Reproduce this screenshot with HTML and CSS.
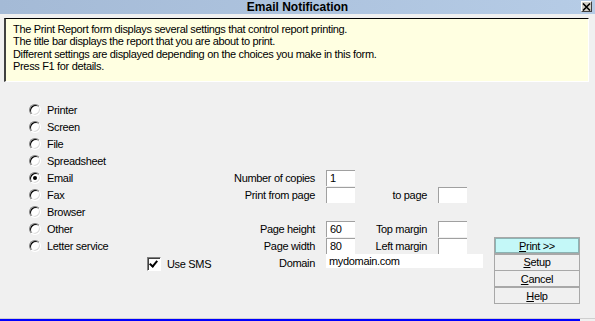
FILE: index.html
```html
<!DOCTYPE html>
<html lang="en">
<head>
    <meta charset="UTF-8">
    <title>Email Notification</title>
    <link rel="stylesheet" href="styles.css">
</head>
<body>
    <div class="titlebar">
        <span class="title">Email Notification</span>
        <span class="close">
            <svg width="9" height="8" viewBox="0 0 9 8"><path d="M1 0.5 L8 7.5 M8 0.5 L1 7.5" stroke="#000" stroke-width="1.6"/></svg>
        </span>
    </div>

    <div class="info">
        <p>The Print Report form displays several settings that control report printing.</p>
        <p>The title bar displays the report that you are about to print.</p>
        <p>Different settings are displayed depending on the choices you make in this form.</p>
        <p>Press F1 for details.</p>
    </div>

    <form class="form">
        <div class="options">
            <label class="radio"><span class="dot"></span>Printer</label>
            <label class="radio"><span class="dot"></span>Screen</label>
            <label class="radio"><span class="dot"></span>File</label>
            <label class="radio"><span class="dot"></span>Spreadsheet</label>
            <label class="radio checked"><span class="dot"></span>Email</label>
            <label class="radio"><span class="dot"></span>Fax</label>
            <label class="radio"><span class="dot"></span>Browser</label>
            <label class="radio"><span class="dot"></span>Other</label>
            <label class="radio"><span class="dot"></span>Letter service</label>
        </div>

        <span class="lbl left r5">Number of copies</span>
        <span class="field c3 r5">1</span>

        <span class="lbl left r6">Print from page</span>
        <span class="field c3 r6"></span>
        <span class="lbl right r6">to page</span>
        <span class="field c5 r6"></span>

        <span class="lbl left r8">Page height</span>
        <span class="field c3 r8">60</span>
        <span class="lbl right r8">Top margin</span>
        <span class="field c5 r8"></span>

        <span class="lbl left r9">Page width</span>
        <span class="field c3 r9">80</span>
        <span class="lbl right r9">Left margin</span>
        <span class="field c5 r9"></span>

        <label class="sms r10"><span class="box"></span>Use SMS</label>
        <span class="lbl left r10">Domain</span>
        <span class="field domain r10">mydomain.com</span>

        <div class="buttons">
            <button type="button" class="btn default"><u>P</u>rint &gt;&gt;</button>
            <button type="button" class="btn"><u>S</u>etup</button>
            <button type="button" class="btn"><u>C</u>ancel</button>
            <button type="button" class="btn"><u>H</u>elp</button>
        </div>
    </form>

    <div class="footer"><div class="bar"></div></div>
</body>
</html>
```

FILE: styles.css
```css
html, body {
    margin: 0;
    padding: 0;
}
body {
    font-family: 'Liberation Sans', Arial, sans-serif;
    font-size: 11px;
    letter-spacing: -0.33px;
    color: #000;
    background-color: #f0f0f0;
    height: 321px;
    overflow: hidden;
    display: flex;
    flex-direction: column;
}
.titlebar {
    height: 14px;
    background: linear-gradient(to right, #a4bad6, #b6cce6);
    display: flex;
    justify-content: center;
    align-items: center;
    position: relative;
}
.title {
    font-size: 12px;
    font-weight: bold;
    letter-spacing: 0;
}
.close {
    position: absolute;
    left: 581px;
    top: 1px;
    width: 9px;
    height: 9px;
    background-color: #d4d0c8;
    border: 1px solid;
    border-color: #fff #404040 #404040 #fff;
    display: flex;
    align-items: center;
    justify-content: center;
}
.info {
    margin: 4px 6px 0 4px;
    height: 54px;
    padding: 4px 8px 4px 7px;
    background-color: #ffffe1;
    border-style: solid;
    border-width: 1px 1px 1px 2px;
    border-color: #000 #fff #fff #404040;
}
.info p {
    margin: 0;
    line-height: 12.4px;
}
.form {
    display: grid;
    grid-template-columns: 118px 179px 29px 83px 29px 27px 86px;
    grid-template-rows: repeat(12, 17px);
    padding-left: 29px;
    margin-top: 19px;
}
.options {
    grid-column: 1;
    grid-row: 1 / span 9;
    display: flex;
    flex-direction: column;
}
.radio {
    height: 17px;
    display: flex;
    align-items: center;
    white-space: nowrap;
}
.dot {
    width: 12px;
    height: 12px;
    border-radius: 50%;
    box-sizing: border-box;
    background-color: #fff;
    border: 1px solid;
    border-color: #808080 #fff #fff #808080;
    box-shadow: inset 1px 1px 0 #000, inset -1px -1px 0 #dcdcdc;
    margin-right: 6px;
    position: relative;
}
.radio.checked .dot::after {
    content: '';
    position: absolute;
    left: 3px;
    top: 3px;
    width: 4px;
    height: 4px;
    border-radius: 50%;
    background-color: #000;
}
.lbl {
    align-self: center;
    text-align: right;
    padding-right: 11px;
    white-space: nowrap;
}
.lbl.left { grid-column: 2; }
.lbl.right { grid-column: 4; }
.r5 { grid-row: 5; }
.r6 { grid-row: 6; }
.r8 { grid-row: 8; }
.r9 { grid-row: 9; }
.r10 { grid-row: 10; }
.c3 { grid-column: 3; }
.c5 { grid-column: 5; }
.field {
    align-self: center;
    height: 16px;
    box-sizing: border-box;
    padding: 1px 0 0 3px;
    line-height: 13px;
    background-color: #fff;
    border-style: solid;
    border-width: 1px 0 0 1px;
    border-color: #a0a0a0;
}
.field.domain {
    grid-column: 3 / span 4;
    width: 157px;
    height: 14px;
    border: none;
    padding-top: 1px;
    align-self: start;
}
.sms {
    grid-column: 2;
    justify-self: start;
    align-self: center;
    display: flex;
    align-items: center;
    margin-top: 2px;
}
.box {
    width: 14px;
    height: 14px;
    box-sizing: border-box;
    border: 1px solid;
    border-color: #808080 #fff #fff #808080;
    box-shadow: inset 1px 1px 0 #404040;
    background-color: #fff;
    margin-right: 6px;
    position: relative;
}
.box::after {
    content: '';
    position: absolute;
    left: 3px;
    top: 1px;
    width: 3px;
    height: 6px;
    border: solid #000;
    border-width: 0 2px 2px 0;
    transform: rotate(40deg);
}
.buttons {
    grid-column: 7;
    grid-row: 9 / span 4;
    display: flex;
    flex-direction: column;
}
.btn {
    font-family: inherit;
    font-size: 11px;
    letter-spacing: inherit;
    height: 17px;
    padding: 0;
    margin: 0 0 -0.3px 0;
    background-color: #f0f0f0;
    border: 1px solid #a8a8a8;
    color: #000;
    line-height: 14px;
}
.btn.default {
    background-color: #c4f8f8;
    box-shadow: inset 0 0 0 1px #8cb4b4;
}
.footer {
    margin-top: auto;
    border-top: 1px solid #cfcfcf;
    height: 2px;
}
.bar {
    width: 580px;
    height: 2px;
    background-color: #0000ff;
}
```
